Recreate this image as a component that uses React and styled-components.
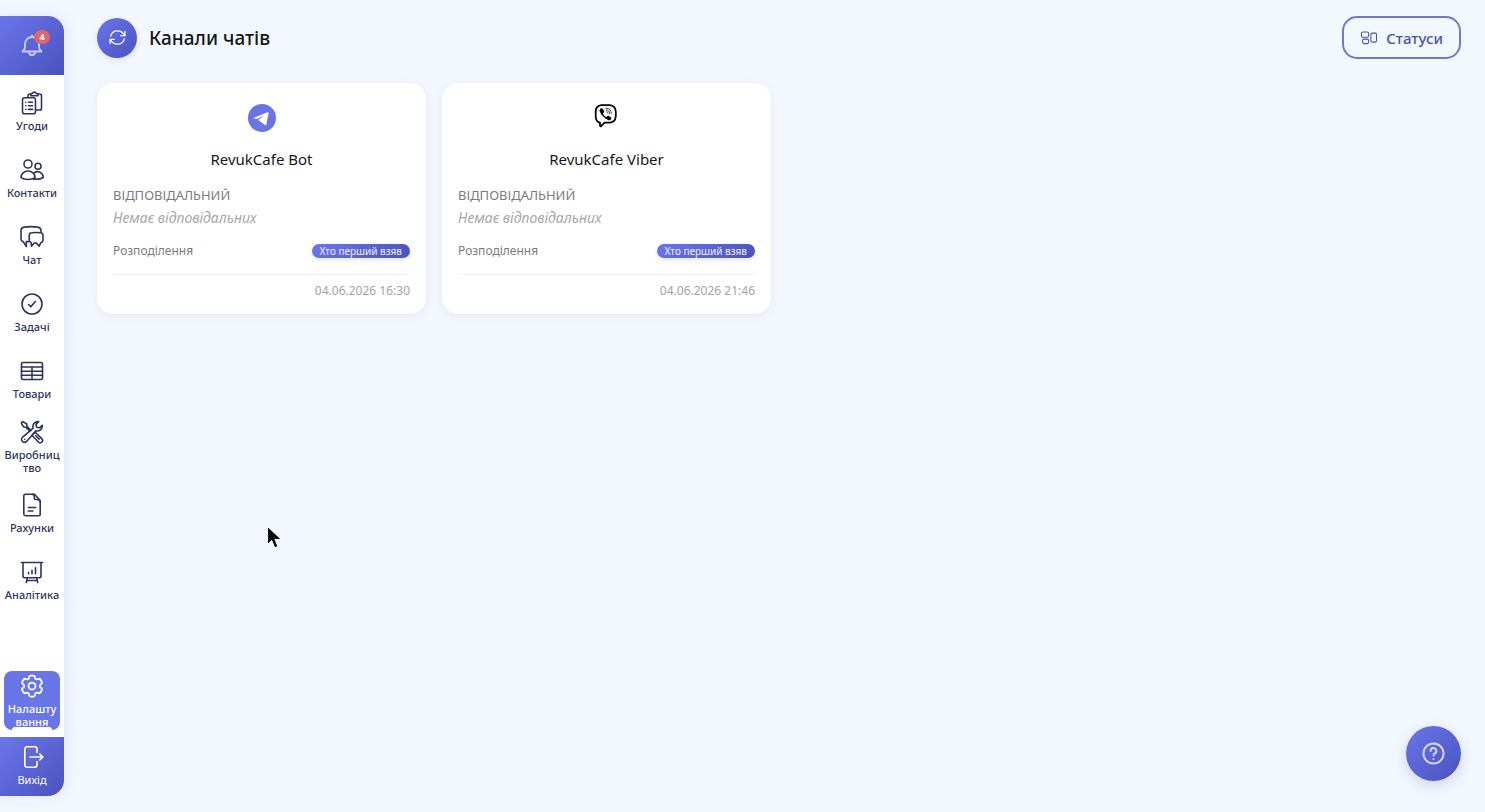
import React from "react";
import styled, { createGlobalStyle, css } from "styled-components";
import { HiOutlineCog6Tooth } from "react-icons/hi2";

const gradient = "linear-gradient(135deg, #6b76ea 0%, #4a52be 100%)";

const GlobalStyle = createGlobalStyle`
  * { box-sizing: border-box; }
  body {
    margin: 0;
    background: #f3f7fe;
    color: #15171c;
    font-family: "Noto Sans", "Open Sans", sans-serif;
  }
  button { font-family: inherit; cursor: pointer; }
  h1, h2, p { margin: 0; padding: 0; }
`;

const Shell = styled.div`
  display: flex;
  align-items: flex-start;
  min-height: 100vh;
`;

const Sidebar = styled.aside`
  position: sticky;
  top: 16px;
  flex: none;
  display: flex;
  flex-direction: column;
  width: 64px;
  height: calc(100vh - 32px);
  margin: 16px 0;
  overflow: hidden;
  background: #fff;
  border-radius: 0 16px 16px 0;
  box-shadow: 2px 0 14px rgba(74, 82, 190, 0.1);
`;

const SideButton = styled.button`
  flex: none;
  display: flex;
  flex-direction: column;
  align-items: center;
  justify-content: center;
  gap: 3px;
  width: 100%;
  height: 59px;
  padding: 0;
  border: 0;
  background: ${gradient};
  color: #fff;
  font-size: 11px;
  line-height: 16px;
`;

const BellWrap = styled.span`
  position: relative;
  display: flex;
  color: #c9cdf8;
`;

const Count = styled.span`
  position: absolute;
  top: -4px;
  right: -6px;
  min-width: 16px;
  height: 14px;
  border-radius: 7px;
  background: #e0656c;
  color: #fff;
  font-size: 9px;
  font-weight: 700;
  line-height: 14px;
  text-align: center;
`;

const Nav = styled.nav`
  flex: 1;
  display: flex;
  flex-direction: column;
  gap: 8px;
  min-height: 0;
  padding: 7px 4px;
`;

const NavItem = styled.a`
  position: relative;
  flex: none;
  display: flex;
  flex-direction: column;
  align-items: center;
  justify-content: center;
  gap: 4px;
  height: 59px;
  overflow: hidden;
  border-radius: 8px;
  color: #2b3562;
  font-size: 11px;
  font-weight: 500;
  line-height: 13px;
  text-align: center;
  text-decoration: none;
  white-space: pre;

  ${({ $active }) =>
    $active &&
    css`
      margin-top: auto;
      background: #6a75e8;
      color: #fff;

      &::after {
        content: "";
        position: absolute;
        bottom: 0;
        left: 8px;
        right: 8px;
        height: 3px;
        border-radius: 3px 3px 0 0;
        background: #fff;
      }
    `}
`;

const Main = styled.main`
  flex: 1;
  min-width: 0;
  padding: 16px 24px 24px 33px;
`;

const Header = styled.header`
  display: flex;
  align-items: center;
  gap: 12px;
  margin-bottom: 24px;
`;

const RoundButton = styled.button`
  display: grid;
  place-items: center;
  width: 40px;
  height: 40px;
  padding: 0;
  border: 0;
  border-radius: 50%;
  background: ${gradient};
  color: #fff;
  box-shadow: 0 2px 6px rgba(74, 82, 190, 0.12);
`;

const HelpButton = styled(RoundButton)`
  position: fixed;
  right: 24px;
  bottom: 31px;
  width: 55px;
  height: 55px;
  color: #d5d8f8;
  box-shadow: 0 4px 14px rgba(40, 50, 120, 0.18);
`;

const Title = styled.h1`
  font-size: 19px;
  font-weight: 500;
  line-height: 28px;
`;

const OutlineButton = styled.button`
  display: flex;
  align-items: center;
  gap: 8px;
  height: 43px;
  margin-left: auto;
  padding: 0 16px;
  border: 2px solid #7079d0;
  border-radius: 15px;
  background: transparent;
  color: #4b53aa;
  font-size: 15px;
  font-weight: 500;
`;

const CardGrid = styled.section`
  display: grid;
  grid-template-columns: repeat(auto-fill, minmax(300px, 1fr));
  gap: 16px;
`;

const Card = styled.article`
  display: flex;
  flex-direction: column;
  padding: 21px 16px 15px;
  border-radius: 16px;
  background: #fff;
  box-shadow: 0 2px 8px rgba(60, 80, 140, 0.08);
`;

const Logo = styled.div`
  display: flex;
  justify-content: center;
  height: 43px;
`;

const CardTitle = styled.h2`
  margin-bottom: 16px;
  font-size: 15px;
  font-weight: 400;
  line-height: 24px;
  text-align: center;
`;

const Caption = styled.p`
  color: #7b7b7f;
  font-size: 12px;
  line-height: 16px;
`;

const Label = styled(Caption)`
  font-size: 13px;
  text-transform: uppercase;
`;

const Empty = styled.p`
  margin: 4px 0 14px;
  color: #a6a6a9;
  font-size: 14px;
  font-style: italic;
  line-height: 22px;
`;

const Row = styled.div`
  display: flex;
  align-items: center;
  justify-content: space-between;
  padding-bottom: 15px;
  border-bottom: 1px solid #f0f1f4;
`;

const Tag = styled.span`
  height: 14px;
  padding: 0 8px;
  border-radius: 7px;
  background: ${gradient};
  box-shadow: 0 2px 5px rgba(74, 82, 190, 0.15);
  color: #f0f0ff;
  font-size: 10px;
  line-height: 14px;
`;

const Stamp = styled.time`
  margin-top: 8px;
  color: #a3a3a7;
  font-size: 12px;
  line-height: 16px;
  text-align: right;
`;

const Pointer = styled.svg`
  position: fixed;
  left: 266px;
  top: 525px;
  pointer-events: none;
`;

function Icon({ size = 24, width = 1.6, children }) {
  return (
    <svg
      width={size}
      height={size}
      viewBox="0 0 24 24"
      fill="none"
      stroke="currentColor"
      strokeWidth={width}
      strokeLinecap="round"
      strokeLinejoin="round"
      aria-hidden="true"
    >
      {children}
    </svg>
  );
}

const icons = {
  deals: (
    <>
      <path d="M8 6.500V4.800A1.800 1.800 0 0 1 9.800 3h1M18 3h1.700a1.800 1.800 0 0 1 1.800 1.800v12.400a1.800 1.800 0 0 1-1.800 1.800H15.500" />
      <path d="M10.800 4.800V3.300c0-.5.4-.8.900-.8h.8a2 2 0 0 1 3.800 0h.8c.5 0 .9.300.9.800v1.500z" />
      <rect x="2.500" y="6.800" width="13" height="16" rx="2" />
      <path d="M5.800 11.200h.1M8.500 11.200h4M5.800 14.800h.1M8.500 14.800h4M5.800 18.400h.1M8.500 18.400h4" />
    </>
  ),
  contacts: (
    <>
      <circle cx="8" cy="6" r="4" />
      <circle cx="18" cy="8.200" r="3" />
      <path d="M1 19.600c0-3.800 3.100-6.600 7-6.600s7 2.800 7 6.600c-1.800 1.200-4.300 1.900-7 1.900s-5.200-.7-7-1.900z" />
      <path d="M14.300 14.800a5.600 5.600 0 0 1 8.900 4.700c-1.300.9-3 1.500-5.200 1.600h-4.500" />
    </>
  ),
  chat: (
    <>
      <path d="M8.800 16.600H6.300v5l-2.900-4.800A3 3 0 0 1 1 14V5.500a3.600 3.600 0 0 1 3.200-3.400c4.500-.6 9-.6 13.500 0A3.600 3.600 0 0 1 21 5.500v1.800" />
      <path d="M12 7.800c2.800-.4 5.600-.4 8.400 0A2.800 2.800 0 0 1 23 10.600v4.500a2.800 2.800 0 0 1-2.300 2.700l-1.600 3.400-2.700-3.200h-2.200l-2.700 3.200-.4-3.600a2.800 2.800 0 0 1-1.900-2.600v-4.500A2.800 2.800 0 0 1 12 7.800z" />
    </>
  ),
  tasks: (
    <>
      <circle cx="12" cy="12" r="10" />
      <path d="m8.500 12.500 2.300 2.300 4.500-5.300" />
    </>
  ),
  goods: (
    <>
      <rect x="1.500" y="3.500" width="21" height="17" rx="1.500" />
      <path d="M1.500 8h21M1.500 12.200h21M1.500 16.300h21M12 8v12.500" />
    </>
  ),
  production: (
    <>
      <path d="m2.500 1.500 4 2.200.7 2.800 3.700 3.700M1.300 3l2.200 3.800 2.900.8 3.600 3.700M1.300 3l1.200-1.500" />
      <path d="m14 13.200 1.500-.7 6.300 6.100a2.400 2.400 0 0 1-3.400 3.400l-6.100-6.200.8-1.600zM15.800 15.800l3.300 3.300" />
      <path d="M22.300 5.300a5 5 0 0 1-6.500 5.400L6.600 21.400A2.900 2.900 0 0 1 2.400 17.300L13.200 8.200A5 5 0 0 1 18.700 1.600L16 4.400l.6 2.900 2.900.5z" />
      <path d="M4.800 19.200h.1" />
    </>
  ),
  bills: (
    <>
      <path d="M14.500 1.300H5.500A1.700 1.700 0 0 0 3.800 3v18a1.700 1.700 0 0 0 1.700 1.700h13a1.700 1.700 0 0 0 1.700-1.700V7.500z" />
      <path d="M12.500 1.300c2.200.4 2 2.500 2 5 2.700 0 5 -.2 5.700 2.300M8.300 18h4.500M8.300 14.500h7.400" />
    </>
  ),
  analytics: (
    <path d="M1.300 2.500h21.400M3 2.500v13.800a1.500 1.500 0 0 0 1.500 1.500h15a1.500 1.500 0 0 0 1.500-1.500V2.500M7.300 18l-1 4.500M16.700 18l1 4.500M6.800 20.500h10.400M8.500 13.800v-1.500M12 13.800v-3.500M15.500 13.800V7.800" />
  ),
  settings: <HiOutlineCog6Tooth x="-2" y="-2" size={28} />,
  exit: (
    <path d="M17 7.500V4a2.200 2.200 0 0 0-2.200-2.200H7A2.200 2.200 0 0 0 4.800 4v16A2.200 2.200 0 0 0 7 22.200h7.800A2.200 2.200 0 0 0 17 20v-3.500M9.800 12h12.700M19.800 9 22.800 12l-3 3" />
  ),
  bell: (
    <>
      <path d="M2.500 17.500c2.500-2 2.500-3.500 2.500-7.500a7 7 0 0 1 14 0c0 4 0 5.500 2.500 7.500z" />
      <path d="M12 3V1.300M9 17.800c0 4.500 6 4.500 6 0" />
    </>
  ),
  refresh: (
    <path d="M22.500 3.500v6H16.500M1.500 20.500v-6H7.500M2.300 10C3.500 5.500 7.500 2.500 12 2.500c4.300 0 8 2.500 10.300 7M21.700 14c-1.200 4.500-5.200 7.500-9.700 7.500-4.300 0-8-2.500-10.300-7" />
  ),
  statuses: (
    <>
      <rect x="2" y="4" width="9.500" height="7" rx="1.700" />
      <rect x="3.500" y="13.500" width="8" height="6" rx="1.700" />
      <rect x="14.500" y="5.500" width="7.500" height="12" rx="1.700" />
    </>
  ),
  help: (
    <>
      <circle cx="12" cy="12" r="10.500" />
      <path d="M9 9.300a3 3 0 1 1 4.500 2.500c-1 .6-1.500 1.200-1.500 2.400M12 17.600v.1" />
    </>
  ),
};

function TelegramLogo() {
  return (
    <svg width="28" height="28" viewBox="0 0 28 28" role="img" aria-label="Telegram">
      <circle cx="14" cy="14" r="14" fill="#6a74e6" />
      <path fill="#fff" d="M5.800 13.900 19.400 8.300c.8-.3 1.400.2 1.200 1.200l-2.200 10.800c-.2.900-.8 1.100-1.500.6l-6-4.400c-.4-.3-.4-.6 0-.9l5.500-4.700-7.200 4-3.400-.4c-.8-.1-.8-.4 0-.6z" />
    </svg>
  );
}

function ViberLogo() {
  return (
    <svg width="28" height="28" viewBox="2 1 28 28" role="img" aria-label="Viber" fill="none">
      <g transform="translate(2 0) scale(.93)">
        <path stroke="#000" strokeWidth="1.900" strokeLinejoin="round" d="M7.500 21.200C4.300 20.300 3.100 18.400 2.900 15V9.200C3 5 5.200 2.900 9 2.400c3.300-.3 6.500-.3 9.300 0 4 .5 5.700 2.300 6.100 6.200.2 2 .2 4.200 0 6.300-.4 4-2.300 5.700-6.200 6.100-2 .2-3.800.2-5.700.1L8.900 24.700c-.8.700-1.400.2-1.400-.8z" />
        <path fill="#000" d="M8.300 6c.8-.7 1.600-.4 2.200.4l1.300 1.800c.5.800.3 1.500-.3 2l-.8.700c.3 1.800 1.700 3.500 3.700 4.200l.8-.9c.5-.6 1.200-.7 1.900-.3l2 1.300c.8.600.9 1.200.4 2-.7 1.200-1.700 1.800-2.900 1.300-4.300-1.800-7.700-5-9.400-9.500-.4-1.200 0-2.200 1.100-3z" />
        <path stroke="#222" strokeWidth=".9" strokeLinecap="round" d="M14 5.500c3.600 0 5.700 2.200 5.700 5.700M14.300 7.500c2.300.1 3.500 1.400 3.500 3.600M14.600 9.400c1 0 1.400.5 1.500 1.500" />
      </g>
    </svg>
  );
}

const navItems = [
  { label: "Угоди", icon: "deals" },
  { label: "Контакти", icon: "contacts" },
  { label: "Чат", icon: "chat" },
  { label: "Задачі", icon: "tasks" },
  { label: "Товари", icon: "goods" },
  { label: "Виробниц\nтво", icon: "production" },
  { label: "Рахунки", icon: "bills" },
  { label: "Аналітика", icon: "analytics" },
  { label: "Налашту\nвання", icon: "settings", active: true },
];

const channels = [
  { name: "RevukCafe Bot", logo: <TelegramLogo />, created: "04.06.2026 16:30" },
  { name: "RevukCafe Viber", logo: <ViberLogo />, created: "04.06.2026 21:46" },
];

export default function App() {
  return (
    <>
      <GlobalStyle />
      <Shell>
        <Sidebar>
          <SideButton aria-label="Сповіщення">
            <BellWrap>
              <Icon width={1.8}>{icons.bell}</Icon>
              <Count>4</Count>
            </BellWrap>
          </SideButton>
          <Nav>
            {navItems.map((item) => (
              <NavItem
                key={item.icon}
                href="#"
                $active={item.active}
                aria-current={item.active ? "page" : undefined}
              >
                <Icon>{icons[item.icon]}</Icon>
                <span>{item.label}</span>
              </NavItem>
            ))}
          </Nav>
          <SideButton>
            <Icon>{icons.exit}</Icon>
            <span>Вихід</span>
          </SideButton>
        </Sidebar>
        <Main>
          <Header>
            <RoundButton aria-label="Оновити">
              <Icon size={17} width={1.8}>{icons.refresh}</Icon>
            </RoundButton>
            <Title>Канали чатів</Title>
            <OutlineButton>
              <Icon size={18} width={1.4}>{icons.statuses}</Icon>
              Статуси
            </OutlineButton>
          </Header>
          <CardGrid>
            {channels.map((channel) => (
              <Card key={channel.name}>
                <Logo>{channel.logo}</Logo>
                <CardTitle>{channel.name}</CardTitle>
                <Label>Відповідальний</Label>
                <Empty>Немає відповідальних</Empty>
                <Row>
                  <Caption>Розподілення</Caption>
                  <Tag>Хто перший взяв</Tag>
                </Row>
                <Stamp>{channel.created}</Stamp>
              </Card>
            ))}
          </CardGrid>
        </Main>
      </Shell>
      <HelpButton aria-label="Допомога">
        <Icon size={23} width={2}>{icons.help}</Icon>
      </HelpButton>
      <Pointer width="18" height="25" viewBox="0 0 18 25" aria-hidden="true">
        <path d="M1.500 1.500v18l4.200-4 3 7.300 3.300-1.400-3-7h6.300z" fill="#0b0b0d" stroke="#fff" strokeWidth="1" />
      </Pointer>
    </>
  );
}
